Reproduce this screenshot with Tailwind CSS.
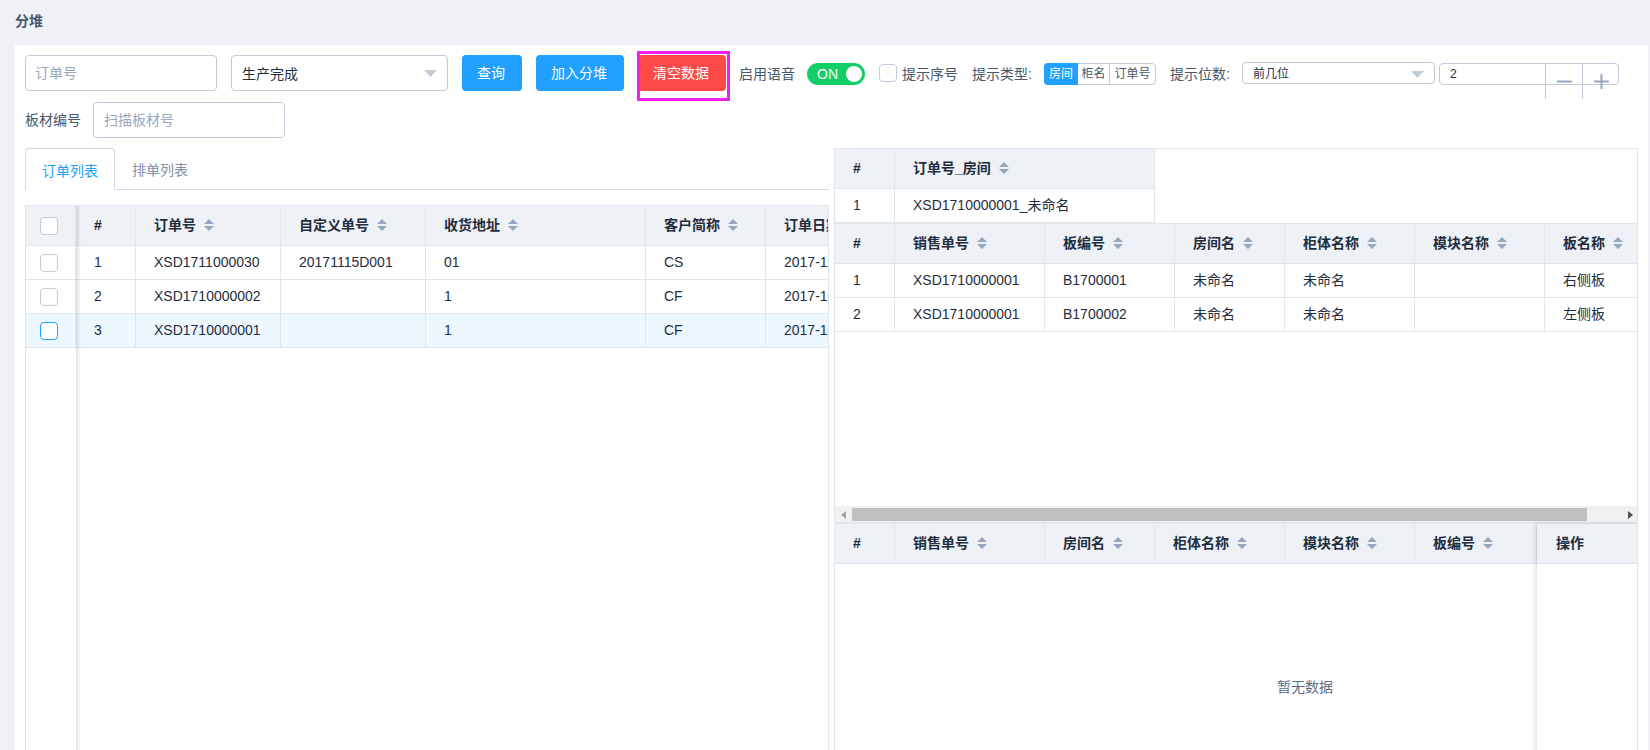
<!doctype html>
<html lang="en">
  <head>
    <meta charset="UTF-8" />
    <meta name="viewport" content="width=device-width, initial-scale=1.0" />
    <title>分堆</title>
    <script src="https://cdn.jsdelivr.net/npm/@tailwindcss/browser@4"></script>
  </head>
  <body class="w-[1650px] h-[750px] overflow-hidden bg-[#eff1f6] text-[14px] text-[#1f2d3d] font-['Liberation_Sans','Noto_Sans_CJK_SC',sans-serif]">
    <div class="h-[45px] pl-[15px] pt-[11px] text-[14px] leading-[20px] font-semibold text-[#48576a]">分堆</div>

    <div class="ml-[15px] w-[1633px] h-[705px] bg-white pl-[10px] pt-[10px]">
      <!-- toolbar -->
      <div class="flex items-start h-[36px] whitespace-nowrap">
        <div class="w-[192px] h-[36px] shrink-0 flex items-center px-[9px] border border-[#bfcbd9] rounded text-[#97a8be]">订单号</div>
        <div class="ml-[14px] w-[217px] h-[36px] shrink-0 flex items-center justify-between px-[10px] pt-[3px] border border-[#bfcbd9] rounded">
          <span>生产完成</span>
          <svg class="-mt-[3px]" width="13" height="7" viewBox="0 0 13 7"><polygon points="0,0 13,0 6.5,7" fill="#bfcbd9" /></svg>
        </div>
        <button class="ml-[14px] w-[60px] h-[36px] pr-[2px] shrink-0 rounded bg-[#20a0ff] text-white">查询</button>
        <button class="ml-[14px] w-[88px] h-[36px] pr-[2px] shrink-0 rounded bg-[#20a0ff] text-white">加入分堆</button>
        <div class="relative ml-[14px] w-[88px] shrink-0">
          <button class="w-[88px] h-[36px] pr-[2px] rounded bg-[#ff4949] text-white">清空数据</button>
          <div class="absolute -left-[1px] -top-[4px] w-[93px] h-[50px] border-[3px] border-[#f01ff0]"></div>
        </div>
        <span class="ml-[13px] mt-[8px] leading-[22px] text-[#48576a]">启用语音</span>
        <div class="ml-[12px] mt-[8px] w-[58px] h-[22px] shrink-0 flex items-center justify-between pl-[10px] pr-[3px] rounded-full bg-[#13ce66] text-white">
          <span>ON</span>
          <span class="w-[16px] h-[16px] rounded-full bg-white"></span>
        </div>
        <span class="ml-[14px] mt-[9px] w-[18px] h-[18px] shrink-0 border border-[#bfcbd9] rounded"></span>
        <span class="ml-[5px] mt-[8px] w-[56px] leading-[22px] text-[#48576a]">提示序号</span>
        <span class="ml-[14px] mt-[8px] w-[60px] leading-[22px] text-[#48576a]">提示类型:</span>
        <div class="ml-[12px] mt-[8px] h-[22px] w-[112px] shrink-0 flex text-[12px] leading-[20px] border border-[#bfcbd9] rounded text-[#48576a]">
          <span class="-my-px -ml-px w-[34px] h-[22px] leading-[22px] text-center bg-[#20a0ff] text-white rounded-l">房间</span>
          <span class="w-[32px] text-center border-r border-[#bfcbd9]">柜名</span>
          <span class="flex-1 text-center">订单号</span>
        </div>
        <span class="ml-[14px] mt-[8px] w-[60px] leading-[22px] text-[#48576a]">提示位数:</span>
        <div class="ml-[12px] mt-[7px] w-[193px] h-[22px] shrink-0 flex items-center justify-between pl-[10px] pr-[10px] pt-[2px] text-[12px] border border-[#bfcbd9] rounded">
          <span>前几位</span>
          <svg width="13" height="7" viewBox="0 0 13 7"><polygon points="0,0 13,0 6.5,7" fill="#bfcbd9" /></svg>
        </div>
        <div class="ml-[4px] mt-[8px] w-[180px] h-[22px] shrink-0 flex items-start text-[12px] border border-[#bfcbd9] rounded">
          <span class="flex-1 pl-[10px] leading-[20px]">2</span>
          <span class="-mt-px w-[37px] h-[36px] flex items-center justify-center border-l border-[#bfcbd9]">
            <svg width="15" height="15" viewBox="0 0 15 15"><path d="M0 7.5h15" stroke="#97a8be" stroke-width="2" /></svg>
          </span>
          <span class="-mt-px -mr-px w-[37px] h-[36px] flex items-center justify-center border-l border-[#bfcbd9]">
            <svg width="15" height="15" viewBox="0 0 15 15"><path d="M0 7.5h15M7.5 0v15" stroke="#97a8be" stroke-width="2" /></svg>
          </span>
        </div>
      </div>

      <div class="mt-[11px] flex items-center h-[36px]">
        <span class="w-[68px] text-[#48576a]">板材编号</span>
        <div class="w-[192px] h-[36px] flex items-center px-[10px] border border-[#bfcbd9] rounded text-[#97a8be]">扫描板材号</div>
      </div>

      <div class="mt-[10px] flex">
        <!-- left: order list -->
        <div class="w-[804px] shrink-0">
          <div class="flex h-[42px] border-b border-[#d1dbe5]">
            <div class="w-[90px] h-[42px] pt-[12px] text-center leading-[20px] text-[#20a0ff] bg-white border border-b-0 border-[#d1dbe5] rounded-t">订单列表</div>
            <div class="w-[90px] pt-[12px] text-center leading-[20px] text-[#8391a5]">排单列表</div>
          </div>
          <div class="relative mt-[15px] h-[560px] overflow-hidden border border-b-0 border-[#dfe6ec]">
            <table class="w-[890px] table-fixed border-separate border-spacing-0 [&_th]:h-[40px] [&_th]:bg-[#eef1f6] [&_th]:font-bold [&_th]:text-left [&_th]:pl-[18px] [&_th]:border-r [&_th]:border-b [&_th]:border-[#dfe6ec] [&_td]:h-[34px] [&_td]:pl-[18px] [&_td]:border-r [&_td]:border-b [&_td]:border-[#dfe6ec]">
              <colgroup>
                <col class="w-[50px]" /><col class="w-[60px]" /><col class="w-[145px]" /><col class="w-[145px]" /><col class="w-[220px]" /><col class="w-[120px]" /><col class="w-[150px]" />
              </colgroup>
              <thead>
                <tr>
                  <th><span class="block -ml-[4px] w-[18px] h-[18px] bg-white border border-[#bfcbd9] rounded"></span></th>
                  <th>#</th>
                  <th>订单号<svg class="inline-block ml-2 -mt-[2px]" width="10" height="12" viewBox="0 0 10 12"><path d="M5 0l5 5H0zM0 7h10l-5 5z" fill="#97a8be" /></svg></th>
                  <th>自定义单号<svg class="inline-block ml-2 -mt-[2px]" width="10" height="12" viewBox="0 0 10 12"><path d="M5 0l5 5H0zM0 7h10l-5 5z" fill="#97a8be" /></svg></th>
                  <th>收货地址<svg class="inline-block ml-2 -mt-[2px]" width="10" height="12" viewBox="0 0 10 12"><path d="M5 0l5 5H0zM0 7h10l-5 5z" fill="#97a8be" /></svg></th>
                  <th>客户简称<svg class="inline-block ml-2 -mt-[2px]" width="10" height="12" viewBox="0 0 10 12"><path d="M5 0l5 5H0zM0 7h10l-5 5z" fill="#97a8be" /></svg></th>
                  <th class="whitespace-nowrap">订单日期</th>
                </tr>
              </thead>
              <tbody>
                <tr>
                  <td><span class="block -ml-[4px] w-[18px] h-[18px] border border-[#bfcbd9] rounded"></span></td>
                  <td>1</td><td>XSD1711000030</td><td>20171115D001</td><td>01</td><td>CS</td><td class="whitespace-nowrap">2017-11-15</td>
                </tr>
                <tr>
                  <td><span class="block -ml-[4px] w-[18px] h-[18px] border border-[#bfcbd9] rounded"></span></td>
                  <td>2</td><td>XSD1710000002</td><td></td><td>1</td><td>CF</td><td class="whitespace-nowrap">2017-10-20</td>
                </tr>
                <tr class="bg-[#edf7ff]">
                  <td><span class="block -ml-[4px] w-[18px] h-[18px] bg-white border border-[#20a0ff] rounded"></span></td>
                  <td>3</td><td>XSD1710000001</td><td></td><td>1</td><td>CF</td><td class="whitespace-nowrap">2017-10-20</td>
                </tr>
              </tbody>
            </table>
            <div class="absolute left-[50px] top-0 bottom-0 w-[5px] bg-gradient-to-r from-black/12 to-transparent"></div>
          </div>
        </div>

        <!-- right: stacked tables -->
        <div class="ml-[5px] w-[804px] h-[602px] shrink-0 flex flex-col overflow-hidden border border-b-0 border-[#dfe6ec]">
          <table class="w-[320px] table-fixed border-separate border-spacing-0 [&_th]:h-[40px] [&_th]:bg-[#eef1f6] [&_th]:font-bold [&_th]:text-left [&_th]:pl-[18px] [&_th]:border-r [&_th]:border-b [&_th]:border-[#dfe6ec] [&_td]:h-[34px] [&_td]:pl-[18px] [&_td]:border-r [&_td]:border-b [&_td]:border-[#dfe6ec]">
            <colgroup><col class="w-[60px]" /><col class="w-[260px]" /></colgroup>
            <thead>
              <tr>
                <th>#</th>
                <th>订单号_房间<svg class="inline-block ml-2 -mt-[2px]" width="10" height="12" viewBox="0 0 10 12"><path d="M5 0l5 5H0zM0 7h10l-5 5z" fill="#97a8be" /></svg></th>
              </tr>
            </thead>
            <tbody>
              <tr><td>1</td><td>XSD1710000001_未命名</td></tr>
            </tbody>
          </table>

          <div class="h-[283px] shrink-0 overflow-hidden border-t border-[#dfe6ec]">
            <table class="w-[860px] table-fixed border-separate border-spacing-0 [&_th]:h-[40px] [&_th]:bg-[#eef1f6] [&_th]:font-bold [&_th]:text-left [&_th]:pl-[18px] [&_th]:border-r [&_th]:border-b [&_th]:border-[#dfe6ec] [&_td]:h-[34px] [&_td]:pl-[18px] [&_td]:border-r [&_td]:border-b [&_td]:border-[#dfe6ec]">
              <colgroup>
                <col class="w-[60px]" /><col class="w-[150px]" /><col class="w-[130px]" /><col class="w-[110px]" /><col class="w-[130px]" /><col class="w-[130px]" /><col class="w-[150px]" />
              </colgroup>
              <thead>
                <tr>
                  <th>#</th>
                  <th>销售单号<svg class="inline-block ml-2 -mt-[2px]" width="10" height="12" viewBox="0 0 10 12"><path d="M5 0l5 5H0zM0 7h10l-5 5z" fill="#97a8be" /></svg></th>
                  <th>板编号<svg class="inline-block ml-2 -mt-[2px]" width="10" height="12" viewBox="0 0 10 12"><path d="M5 0l5 5H0zM0 7h10l-5 5z" fill="#97a8be" /></svg></th>
                  <th>房间名<svg class="inline-block ml-2 -mt-[2px]" width="10" height="12" viewBox="0 0 10 12"><path d="M5 0l5 5H0zM0 7h10l-5 5z" fill="#97a8be" /></svg></th>
                  <th>柜体名称<svg class="inline-block ml-2 -mt-[2px]" width="10" height="12" viewBox="0 0 10 12"><path d="M5 0l5 5H0zM0 7h10l-5 5z" fill="#97a8be" /></svg></th>
                  <th>模块名称<svg class="inline-block ml-2 -mt-[2px]" width="10" height="12" viewBox="0 0 10 12"><path d="M5 0l5 5H0zM0 7h10l-5 5z" fill="#97a8be" /></svg></th>
                  <th>板名称<svg class="inline-block ml-2 -mt-[2px]" width="10" height="12" viewBox="0 0 10 12"><path d="M5 0l5 5H0zM0 7h10l-5 5z" fill="#97a8be" /></svg></th>
                </tr>
              </thead>
              <tbody>
                <tr><td>1</td><td>XSD1710000001</td><td>B1700001</td><td>未命名</td><td>未命名</td><td></td><td>右侧板</td></tr>
                <tr><td>2</td><td>XSD1710000001</td><td>B1700002</td><td>未命名</td><td>未命名</td><td></td><td>左侧板</td></tr>
              </tbody>
            </table>
          </div>

          <!-- horizontal scrollbar -->
          <div class="h-[16px] shrink-0 flex items-center pt-[1px] bg-[#f1f1f1]">
            <svg class="ml-[6px] shrink-0" width="5" height="8" viewBox="0 0 5 8"><path d="M5 0v8L0 4z" fill="#a3a3a3" /></svg>
            <div class="ml-[6px] w-[735px] h-[13px] shrink-0 bg-[#bfbfbf]"></div>
            <svg class="ml-[41px] shrink-0" width="5" height="8" viewBox="0 0 5 8"><path d="M0 0v8l5-4z" fill="#505050" /></svg>
          </div>

          <div class="relative flex-1 border-t-2 border-[#dfe6ec]">
            <table class="w-[802px] table-fixed border-separate border-spacing-0 [&_th]:h-[40px] [&_th]:bg-[#eef1f6] [&_th]:font-bold [&_th]:text-left [&_th]:pl-[18px] [&_th]:border-r [&_th]:border-b [&_th]:border-[#dfe6ec]">
              <colgroup>
                <col class="w-[60px]" /><col class="w-[150px]" /><col class="w-[110px]" /><col class="w-[130px]" /><col class="w-[130px]" /><col class="w-[122px]" /><col class="w-[100px]" />
              </colgroup>
              <thead>
                <tr>
                  <th>#</th>
                  <th>销售单号<svg class="inline-block ml-2 -mt-[2px]" width="10" height="12" viewBox="0 0 10 12"><path d="M5 0l5 5H0zM0 7h10l-5 5z" fill="#97a8be" /></svg></th>
                  <th>房间名<svg class="inline-block ml-2 -mt-[2px]" width="10" height="12" viewBox="0 0 10 12"><path d="M5 0l5 5H0zM0 7h10l-5 5z" fill="#97a8be" /></svg></th>
                  <th>柜体名称<svg class="inline-block ml-2 -mt-[2px]" width="10" height="12" viewBox="0 0 10 12"><path d="M5 0l5 5H0zM0 7h10l-5 5z" fill="#97a8be" /></svg></th>
                  <th>模块名称<svg class="inline-block ml-2 -mt-[2px]" width="10" height="12" viewBox="0 0 10 12"><path d="M5 0l5 5H0zM0 7h10l-5 5z" fill="#97a8be" /></svg></th>
                  <th>板编号<svg class="inline-block ml-2 -mt-[2px]" width="10" height="12" viewBox="0 0 10 12"><path d="M5 0l5 5H0zM0 7h10l-5 5z" fill="#97a8be" /></svg></th>
                  <th></th>
                </tr>
              </thead>
            </table>
            <div class="w-[940px] h-[246px] flex items-center justify-center text-[#5e6d82]">暂无数据</div>
            <div class="absolute right-0 top-0 bottom-0 w-[100px] bg-white shadow-[-2px_0_5px_rgba(0,0,0,0.12)]">
              <div class="h-[40px] leading-[39px] pl-[19px] font-bold bg-[#eef1f6] border-b border-[#dfe6ec]">操作</div>
            </div>
          </div>
        </div>
      </div>
    </div>
  </body>
</html>
